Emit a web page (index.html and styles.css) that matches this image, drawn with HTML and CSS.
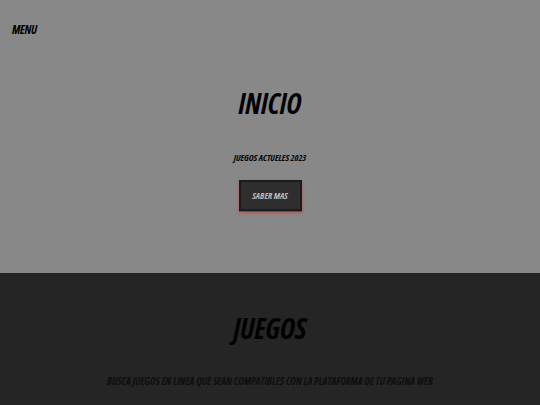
FILE: index.html
```html
<!DOCTYPE html>
<html>
<head>
<meta charset="utf-8">
<link rel="stylesheet" href="styles.css">
</head>
<body>
<section class="hero">
  <nav class="nav"><span class="menu">MENU</span></nav>
  <div class="hero-body">
    <h1 class="title">INICIO</h1>
    <p class="sub">JUEGOS ACTUELES 2023</p>
    <button class="btn">SABER MAS</button>
  </div>
</section>
<section class="games">
  <h2 class="title">JUEGOS</h2>
  <p class="desc">BUSCA JUEGOS EN LINEA QUE SEAN COMPATIBLES CON LA PLATAFORMA DE TU PAGINA WEB</p>
</section>
</body>
</html>
```
FILE: styles.css
```css
html, body { margin: 0; padding: 0; }
body {
  font-family: "Open Sans", "DejaVu Sans", sans-serif;
  font-style: italic;
  font-weight: 700;
  font-stretch: condensed;
  color: #000;
  background: #252525;
}
.hero {
  background: #888888;
  height: 273px;
  display: flex;
  flex-direction: column;
}
.nav { padding: 17px 12px 0; height: 20px; }
.menu { font-size: 12px; letter-spacing: -0.3px; }
.hero-body {
  display: flex;
  flex-direction: column;
  align-items: center;
  padding-top: 48px;
}
.title {
  margin: 0;
  font-size: 28px;
  line-height: 36px;
  font-weight: 700;
}
.sub { margin: 31px 0 0; font-size: 9px; line-height: 12px; }
.btn {
  margin-top: 16px;
  width: 63px;
  height: 31px;
  background: #2e2e2e;
  border: 2px solid #1b1b1b;
  box-shadow: 0 1px 0 #c0282a, 0 2px 3px rgba(220, 50, 50, 0.6);
  color: #bdbdbd;
  font-family: inherit;
  font-style: italic;
  font-weight: 700;
  font-stretch: condensed;
  font-size: 9px;
  padding: 0;
}
.games {
  display: flex;
  flex-direction: column;
  align-items: center;
  padding-top: 37px;
}
.games .title { font-size: 28px; }
.desc { margin: 29px 0 0; font-size: 10.4px; line-height: 12px; color: #0e0e0e; }
```
